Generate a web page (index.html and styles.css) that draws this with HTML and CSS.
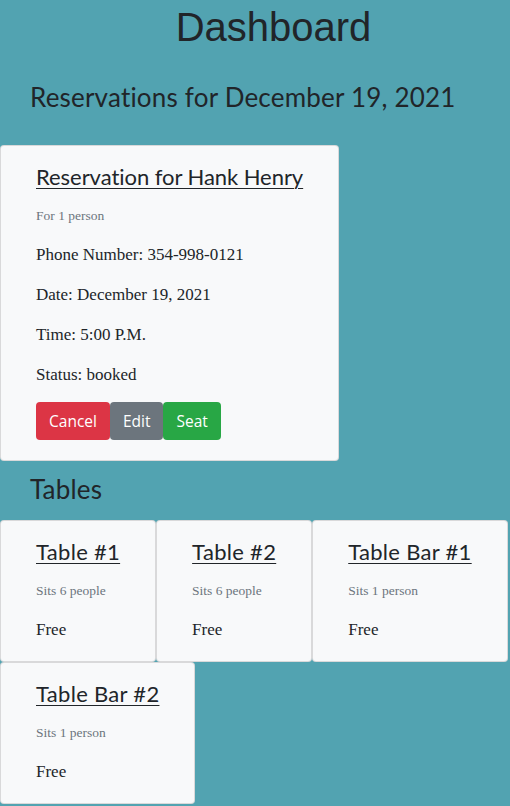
FILE: index.html
```html
<!DOCTYPE html>
<html>
<head>
<meta charset="utf-8">
<link rel="stylesheet" href="styles.css">
</head>
<body>
<h1 class="page-title">Dashboard</h1>
<h2 class="section-title">Reservations for December 19, 2021</h2>
<div class="card-list">
  <div class="card">
    <a class="card-title card-title-long" href="#">Reservation for Hank Henry</a>
    <div class="card-subtitle">For 1 person</div>
    <p class="card-text">Phone Number: 354-998-0121</p>
    <p class="card-text">Date: December 19, 2021</p>
    <p class="card-text">Time: 5:00 P.M.</p>
    <p class="card-text">Status: booked</p>
    <div class="btn-row">
      <button class="btn btn-danger">Cancel</button>
      <button class="btn btn-secondary">Edit</button>
      <button class="btn btn-success">Seat</button>
    </div>
  </div>
</div>
<h2 class="section-title tables-title">Tables</h2>
<div class="card-list tables-list">
  <div class="card">
    <a class="card-title" href="#">Table #1</a>
    <div class="card-subtitle">Sits 6 people</div>
    <p class="card-text">Free</p>
  </div>
  <div class="card">
    <a class="card-title" href="#">Table #2</a>
    <div class="card-subtitle">Sits 6 people</div>
    <p class="card-text">Free</p>
  </div>
  <div class="card">
    <a class="card-title" href="#">Table Bar #1</a>
    <div class="card-subtitle">Sits 1 person</div>
    <p class="card-text">Free</p>
  </div>
  <div class="card">
    <a class="card-title" href="#">Table Bar #2</a>
    <div class="card-subtitle">Sits 1 person</div>
    <p class="card-text">Free</p>
  </div>
</div>
</body>
</html>
```
FILE: styles.css
```css
* { box-sizing: border-box; }
body {
  margin: 0;
  background: #52a3b1;
  color: #212529;
  font-family: "Liberation Serif", serif;
}
.page-title {
  font-family: "Liberation Sans", Arial, sans-serif;
  font-weight: 400;
  font-size: 40px;
  line-height: 48px;
  text-align: center;
  margin: 3px 0 0 0;
  padding-left: 37px;
}
.section-title {
  font-family: "Lato", sans-serif;
  font-weight: 400;
  font-size: 26px;
  line-height: 30px;
  letter-spacing: 0.2px;
  margin: 31px 0 0 30px;
  padding: 0;
}
.tables-title {
  margin-top: 13px;
}
.card-list {
  display: flex;
  flex-wrap: wrap;
  align-items: flex-start;
  margin-top: 33px;
}
.tables-list { margin-top: 16px; }
.card {
  background: #f8f9fa;
  border: 1px solid rgba(0,0,0,.125);
  border-radius: 4px;
  padding: 18px 35px 19px 35px;
}
.card-title {
  display: block;
  font-family: "Lato", sans-serif;
  font-size: 22px;
  line-height: 26px;
  letter-spacing: 0.3px;
  color: #212529;
  text-decoration: underline;
  text-decoration-thickness: 1px;
  text-underline-offset: 3px;
  white-space: nowrap;
}
.card-title-long {
  letter-spacing: -0.05px;
}
.card-subtitle {
  font-size: 13.5px;
  line-height: 16px;
  color: #6c757d;
  margin-top: 18px;
}
.card-text {
  font-size: 17px;
  line-height: 24px;
  margin: 16px 0 0 0;
}
.card-subtitle + .card-text { margin-top: 19px; }
.btn-row {
  display: flex;
  margin-top: 15px;
  padding-bottom: 1px;
}
.btn {
  font-family: "Open Sans", sans-serif;
  font-size: 15.5px;
  line-height: 24px;
  padding: 6px 12px;
  border: 1px solid transparent;
  border-radius: 4px;
  color: #fff;
}
.btn-danger { background: #dc3545; }
.btn-secondary { background: #6c757d; }
.btn-success { background: #28a745; }
```
